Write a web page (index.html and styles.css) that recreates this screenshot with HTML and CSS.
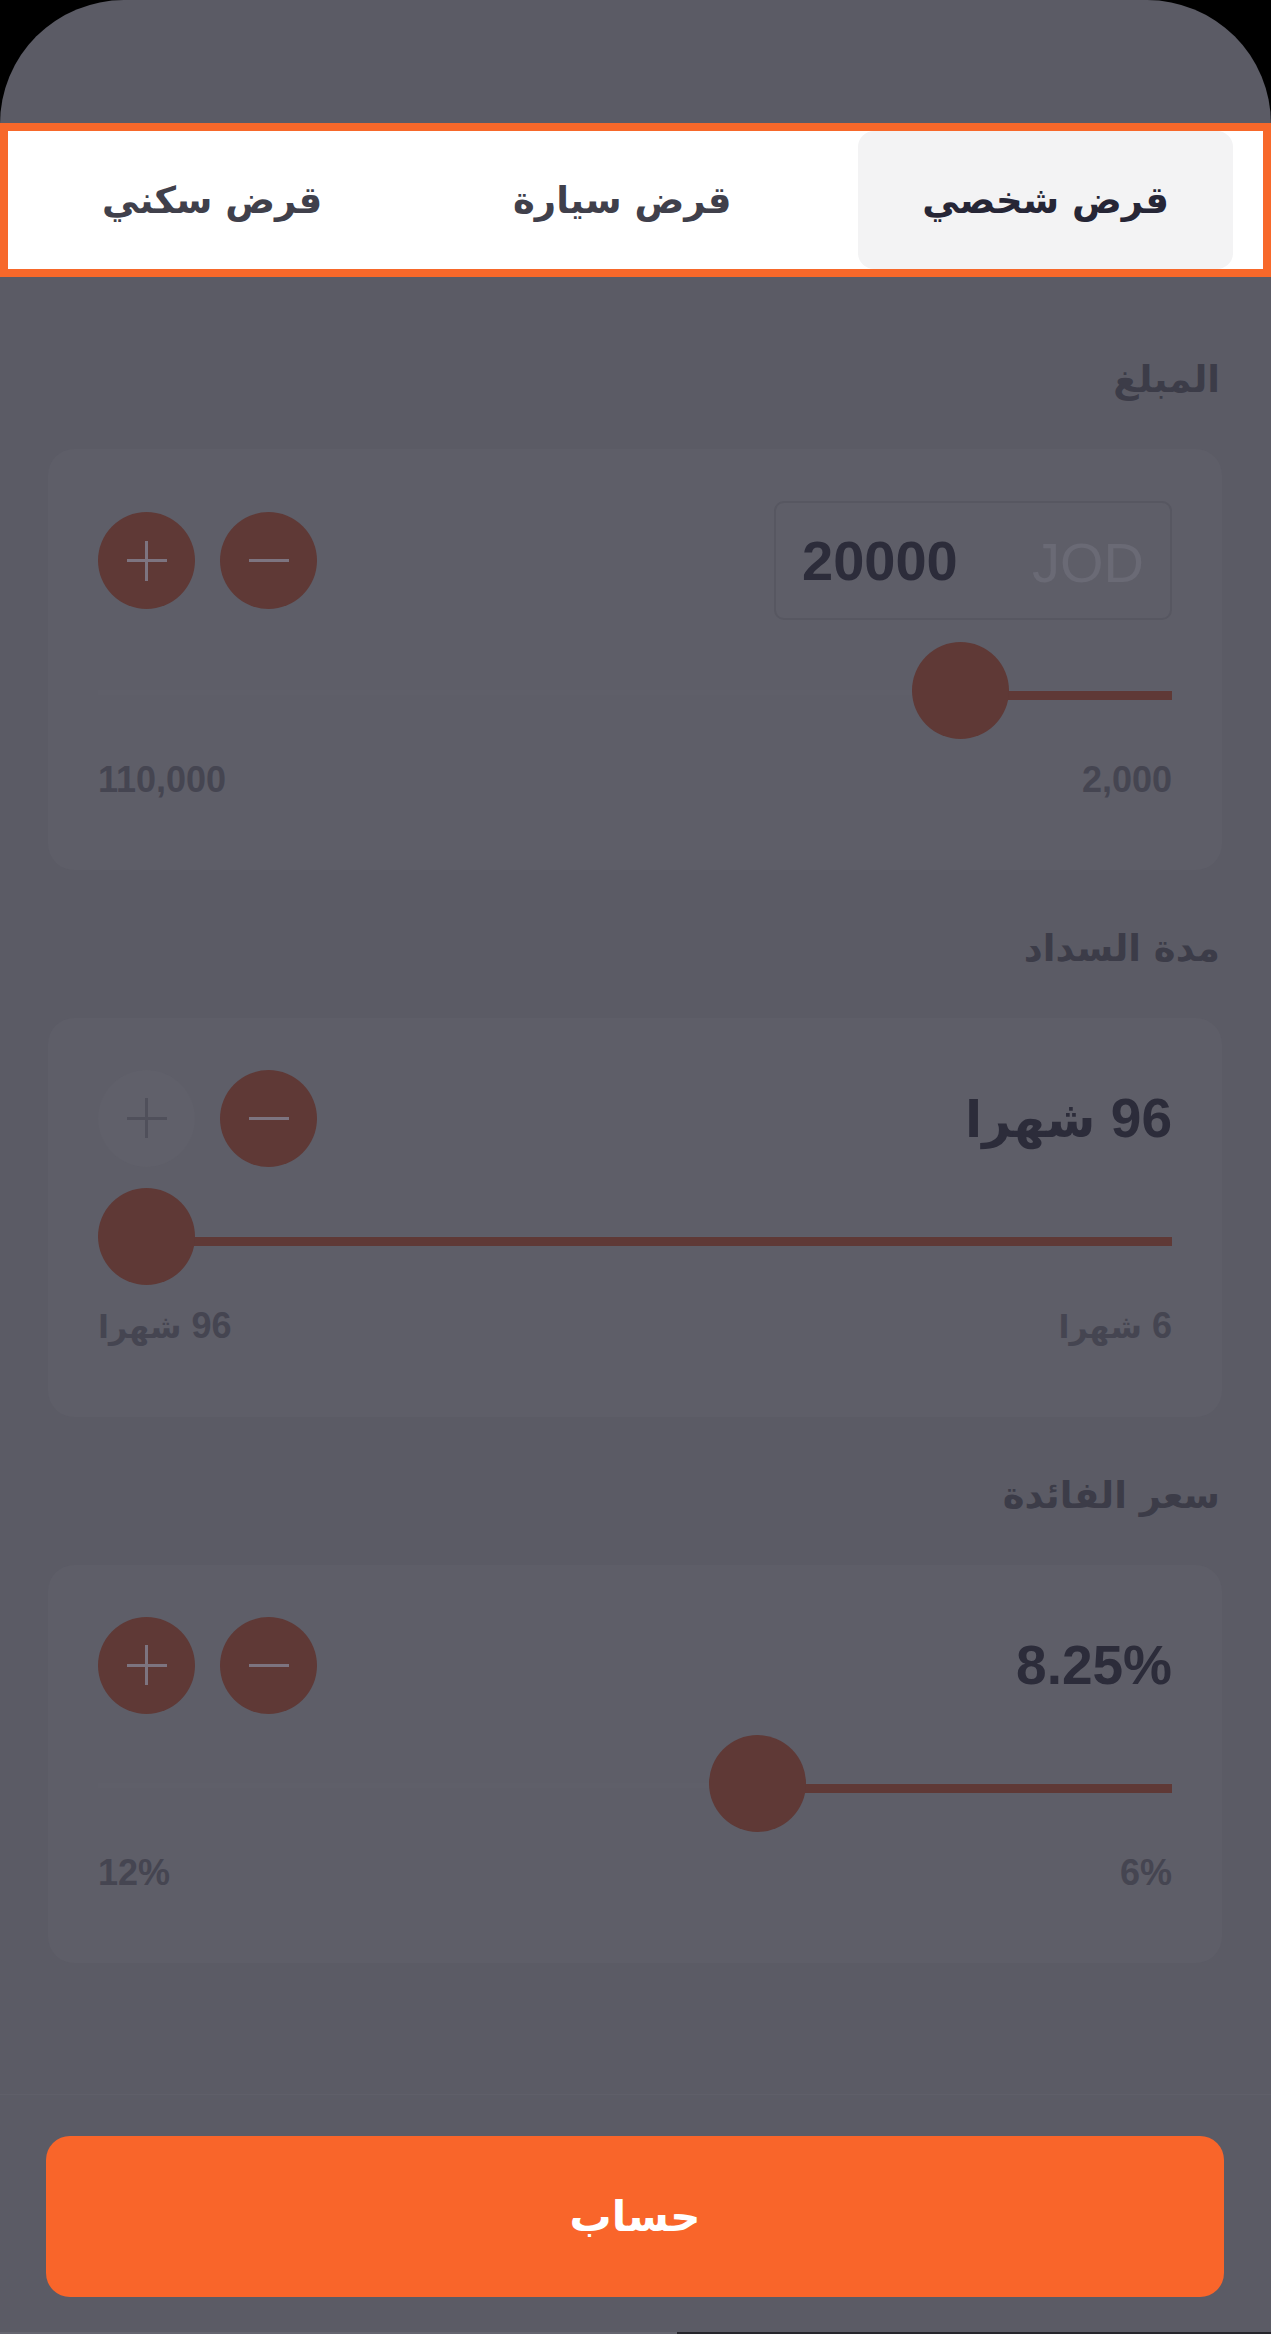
FILE: index.html
```html
<!DOCTYPE html>
<html lang="ar">
<head>
<meta charset="utf-8">
<title>حاسبة القرض</title>
<link rel="stylesheet" href="styles.css">
</head>
<body>
<div class="sheet" dir="rtl">
  <div class="tabs-frame">
    <div class="tabs">
      <div class="tab tab-active">قرض شخصي</div>
      <div class="tab">قرض سيارة</div>
      <div class="tab">قرض سكني</div>
    </div>
  </div>

  <div class="content">
    <section class="section">
      <div class="section-label">المبلغ</div>
      <div class="card">
        <div class="row">
          <div class="amount-box" dir="ltr">
            <span class="amount-value">20000</span>
            <span class="amount-currency">JOD</span>
          </div>
          <div class="steppers">
            <div class="stepper"><span class="minus"></span></div>
            <div class="stepper"><span class="plus"></span></div>
          </div>
        </div>
        <div class="slider" style="--p:0.1667">
          <div class="track"></div>
          <div class="fill"></div>
          <div class="thumb"></div>
        </div>
        <div class="range">
          <span>2,000</span>
          <span>110,000</span>
        </div>
      </div>
    </section>

    <section class="section">
      <div class="section-label">مدة السداد</div>
      <div class="card">
        <div class="row row-small">
          <div class="value">96 <span class="ar">شهرا</span></div>
          <div class="steppers">
            <div class="stepper"><span class="minus"></span></div>
            <div class="stepper stepper-disabled"><span class="plus"></span></div>
          </div>
        </div>
        <div class="slider" style="--p:1">
          <div class="track"></div>
          <div class="fill"></div>
          <div class="thumb"></div>
        </div>
        <div class="range">
          <span>6 <span class="ar">شهرا</span></span>
          <span>96 <span class="ar">شهرا</span></span>
        </div>
      </div>
    </section>

    <section class="section">
      <div class="section-label">سعر الفائدة</div>
      <div class="card">
        <div class="row row-small">
          <div class="value" dir="ltr">8.25%</div>
          <div class="steppers">
            <div class="stepper"><span class="minus"></span></div>
            <div class="stepper"><span class="plus"></span></div>
          </div>
        </div>
        <div class="slider" style="--p:0.375">
          <div class="track"></div>
          <div class="fill"></div>
          <div class="thumb"></div>
        </div>
        <div class="range">
          <span dir="ltr">6%</span>
          <span dir="ltr">12%</span>
        </div>
      </div>
    </section>
  </div>

  <div class="footer">
    <button class="calc-btn" type="button">حساب</button>
  </div>
  <div class="bottom-edge" dir="ltr">
    <div class="edge-light"></div>
    <div class="edge-dark"></div>
  </div>
</div>
</body>
</html>
```

FILE: styles.css
```css
* {
  box-sizing: border-box;
}

html, body {
  margin: 0;
  padding: 0;
  background: #000;
}

body {
  font-family: "Liberation Sans", "DejaVu Sans", sans-serif;
  width: 1271px;
  height: 2334px;
  overflow: hidden;
}

.sheet {
  width: 1271px;
  height: 2334px;
  background: #5b5b65;
  border-radius: 124px 124px 0 0;
  padding-top: 123px;
  display: flex;
  flex-direction: column;
}

.tabs-frame {
  height: 154px;
  border: 8px solid #f7682a;
  background: #ffffff;
}

.tabs {
  height: 100%;
  display: flex;
  justify-content: space-between;
  padding: 0 30px;
}

.tab {
  height: 100%;
  padding: 0 64px;
  display: flex;
  align-items: center;
  justify-content: center;
  font-family: "DejaVu Sans", sans-serif;
  font-weight: bold;
  font-size: 37px;
  color: #40404b;
  border-radius: 16px;
}

.tab-active {
  background: #f3f3f4;
  color: #262636;
}

.content {
  padding: 78px 49px 0 48px;
  display: flex;
  flex-direction: column;
  gap: 54px;
}

.section-label {
  font-family: "DejaVu Sans", sans-serif;
  font-weight: bold;
  font-size: 37px;
  line-height: 50px;
  color: #3c3c48;
  margin-bottom: 44px;
  padding-right: 2px;
}

.card {
  background: #5e5e68;
  border-radius: 26px;
  padding: 52px 50px 68px 50px;
}

.row {
  display: flex;
  justify-content: space-between;
  align-items: center;
  height: 119px;
}

.row-small {
  height: 96px;
}

.amount-box {
  width: 398px;
  height: 119px;
  border: 2px solid #575761;
  border-radius: 10px;
  display: flex;
  align-items: center;
  justify-content: space-between;
  padding: 0 26px;
}

.amount-value {
  font-weight: bold;
  font-size: 56px;
  color: #2c2c3a;
}

.amount-currency {
  font-size: 56px;
  color: #6a6a75;
  padding-top: 4px;
}

.value {
  font-weight: bold;
  font-size: 55px;
  color: #2c2c3a;
}

.value .ar {
  font-size: 50px;
}

.steppers {
  display: flex;
  gap: 25px;
}

.stepper {
  width: 97px;
  height: 97px;
  border-radius: 50%;
  background: #5f3936;
  position: relative;
}

.stepper-disabled {
  background: #60606a;
}

.minus,
.plus {
  position: absolute;
  left: 50%;
  top: 50%;
  width: 40px;
  height: 3px;
  margin: -1.5px 0 0 -20px;
  background: #7d7480;
}

.plus::after {
  content: "";
  position: absolute;
  left: 18.5px;
  top: -18.5px;
  width: 3px;
  height: 40px;
  background: #7d7480;
}

.stepper-disabled .plus,
.stepper-disabled .plus::after {
  background: #50505b;
}

.slider {
  position: relative;
  height: 98px;
  margin-top: 22px;
}

.track {
  position: absolute;
  left: 0;
  right: 0;
  top: 48px;
  height: 5px;
  background: #5f5f69;
}

.fill {
  position: absolute;
  right: 0;
  top: 49px;
  height: 9px;
  width: calc(48.5px + var(--p) * (100% - 97px));
  background: #5f3936;
}

.thumb {
  position: absolute;
  top: 0;
  right: calc(var(--p) * (100% - 97px));
  width: 97px;
  height: 97px;
  border-radius: 50%;
  background: #5f3936;
}

.range {
  margin-top: 18px;
  display: flex;
  justify-content: space-between;
  font-weight: bold;
  font-size: 36px;
  line-height: 44px;
  color: #454551;
}

.range .ar {
  font-size: 32px;
}

.footer {
  margin-top: auto;
  border-top: 1px solid #5f5f69;
  padding: 41px 47px 35px 46px;
}

.calc-btn {
  display: block;
  width: 100%;
  height: 161px;
  border: none;
  border-radius: 24px;
  background: #f9652a;
  color: #ffffff;
  font-family: "DejaVu Sans", sans-serif;
  font-weight: bold;
  font-size: 42px;
}

.bottom-edge {
  display: flex;
  height: 2px;
}

.edge-light {
  width: 677px;
  background: #65656f;
}

.edge-dark {
  flex: 1;
  background: #26262c;
}
```
